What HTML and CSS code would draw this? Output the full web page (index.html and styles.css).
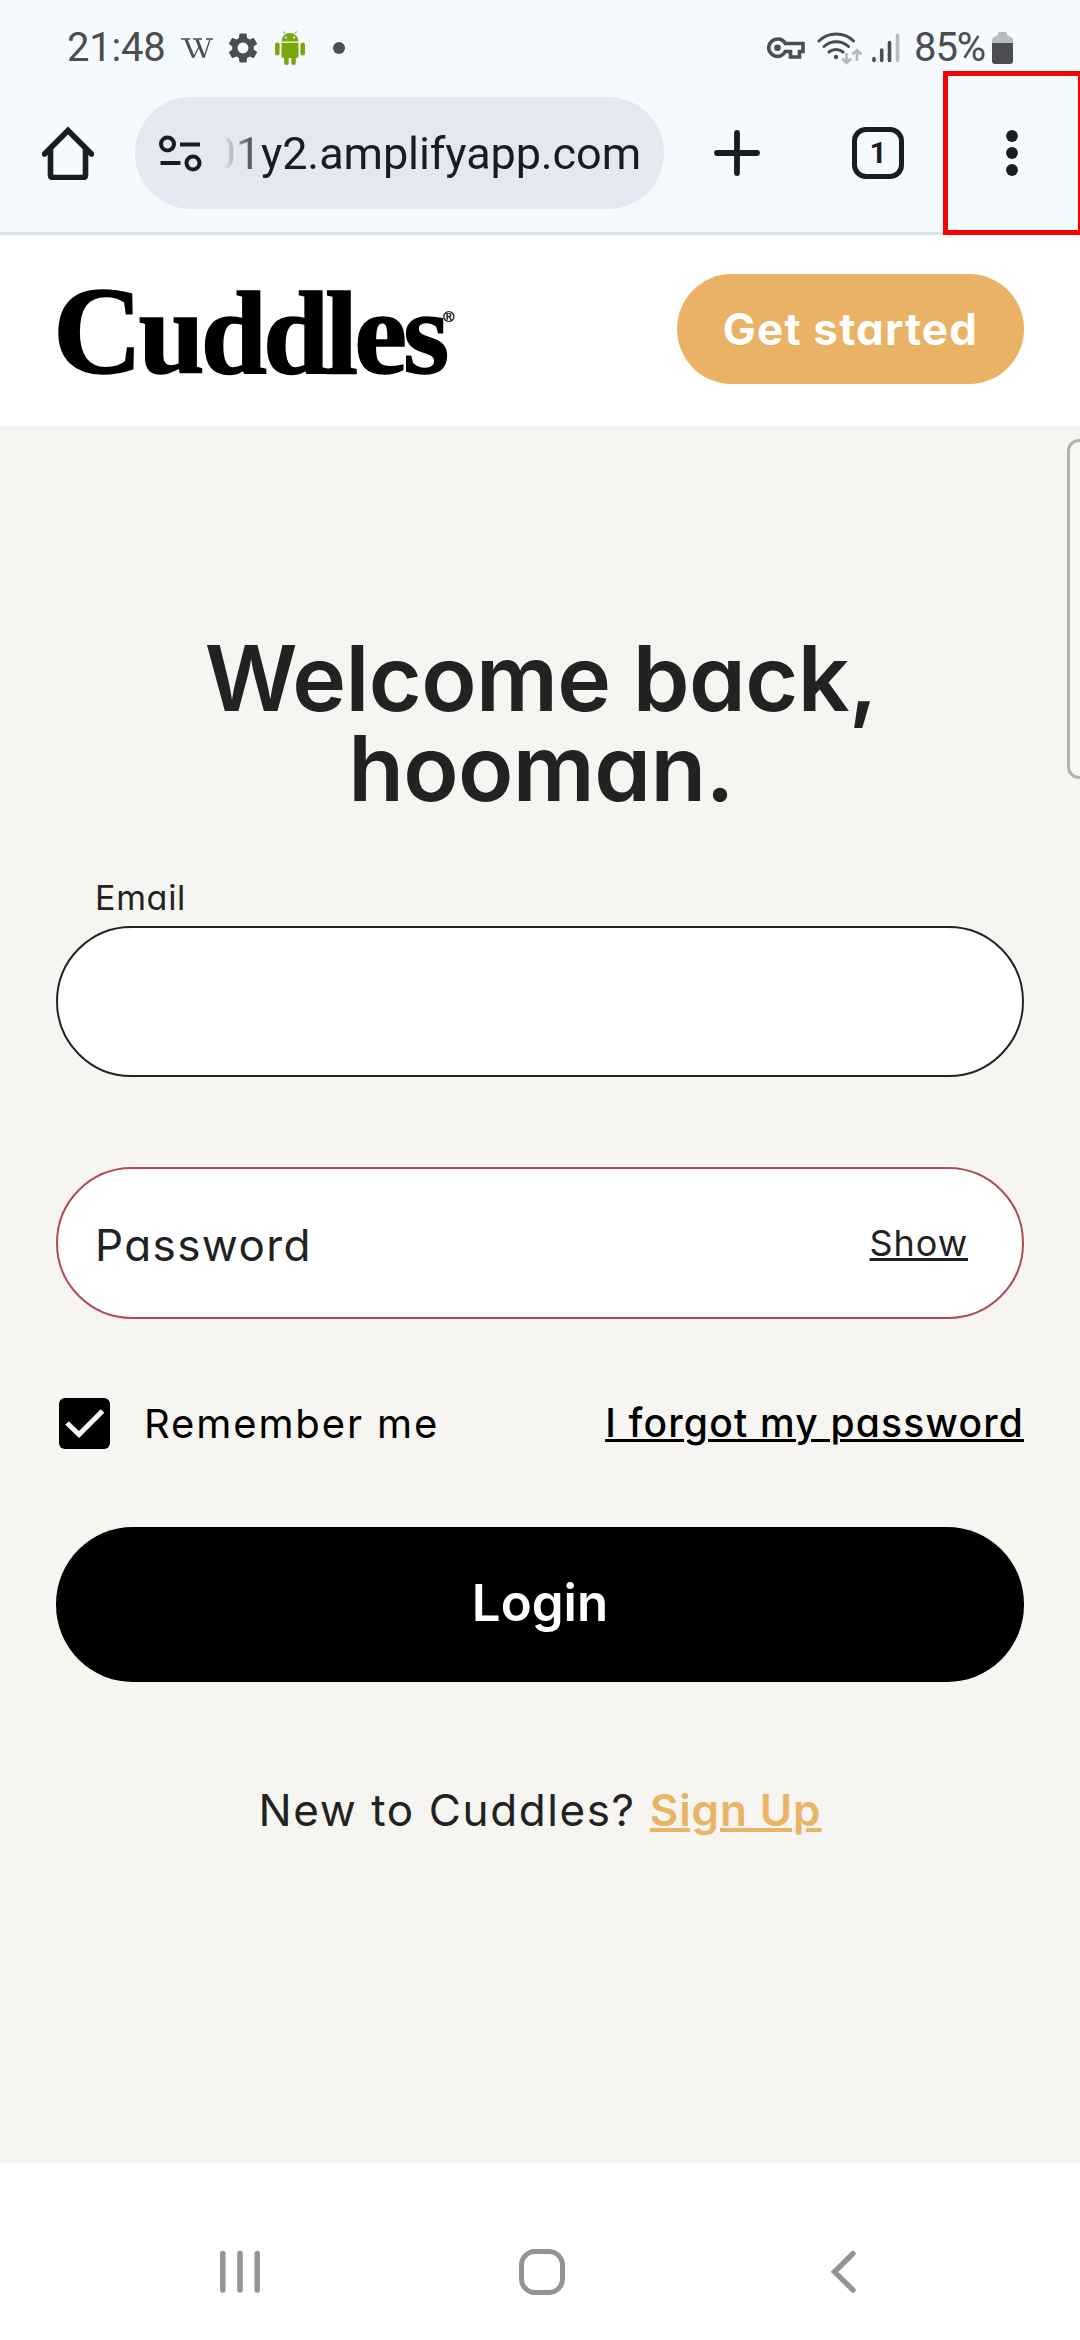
FILE: index.html
```html
<!DOCTYPE html>
<html lang="en">
<head>
<meta charset="utf-8">
<title>Cuddles – Login</title>
<link rel="stylesheet" href="styles.css">
</head>
<body>
<div class="screen">
  <div class="status-bar">
    <span class="clock">21:48</span>
    <svg class="wiki" width="32" height="22" viewBox="0 0 32 22"><g stroke="#4b4d4f" fill="none"><path d="M5 1.500 12.500 19.500M16 1.500 23 19.500" stroke-width="3"/><path d="M12.500 19.500 19 7M23 19.500 29 1.500" stroke-width="1.300"/><path d="M0 1h9M12 1h9M25 1h7" stroke-width="1.500"/></g></svg>
    <svg class="gear" width="36" height="36" viewBox="0 0 24 24"><path fill="#4b4d4f" d="M19.140 12.940c.04-.3.060-.61.060-.94 0-.32-.02-.64-.07-.94l2.030-1.580a.49.49 0 0 0 .12-.61l-1.920-3.320a.488.488 0 0 0-.59-.22l-2.390.96c-.5-.38-1.030-.7-1.620-.94l-.36-2.540a.484.484 0 0 0-.48-.41h-3.840c-.24 0-.43.170-.47.410l-.36 2.540c-.59.240-1.130.570-1.620.940l-2.390-.96c-.22-.08-.47 0-.59.220L2.740 8.870c-.12.210-.08.470.12.610l2.030 1.580c-.05.300-.09.630-.09.940s.02.640.070.940l-2.030 1.580a.49.49 0 0 0-.12.610l1.920 3.320c.12.220.37.290.59.220l2.390-.96c.5.380 1.030.700 1.620.940l.36 2.540c.05.240.24.410.48.410h3.840c.24 0 .44-.17.47-.41l.36-2.540c.59-.24 1.130-.56 1.620-.94l2.390.96c.22.080.47 0 .59-.22l1.920-3.320c.12-.22.070-.47-.12-.61l-2.010-1.580zM12 15.600c-1.980 0-3.600-1.620-3.600-3.600s1.620-3.600 3.600-3.600 3.600 1.620 3.600 3.600-1.620 3.600-3.600 3.600z"/></svg>
    <svg class="droid" width="30" height="34" viewBox="0 0 30 34"><g fill="#7ba70c"><path d="M6.500 10.500a8.500 8.500 0 0 1 17 0z"/><path d="M6.500 11.800h17V25a2 2 0 0 1-2 2h-13a2 2 0 0 1-2-2z"/><rect y="11.500" width="4.600" height="13" rx="2.300"/><rect x="25.400" y="11.500" width="4.600" height="13" rx="2.300"/><rect x="9.200" y="22" width="4.500" height="12" rx="2"/><rect x="16.300" y="22" width="4.500" height="12" rx="2"/></g><path d="M10 3 8.500.5M20 3 21.500.5" stroke="#7ba70c"/><circle cx="11" cy="6.500" r="1" fill="#f5faff"/><circle cx="19" cy="6.500" r="1" fill="#f5faff"/></svg>
    <span class="more-dot"></span>
    <svg class="key" width="38" height="22" viewBox="0 0 38 22"><path d="M10.500 2a8.700 8.700 0 1 0 7.800 12.500h5.200v5.500h9v-5.500h3.500v-8h-17.700A8.700 8.700 0 0 0 10.500 2z" fill="none" stroke="#4b4d4f" stroke-width="3.600"/><circle cx="10.500" cy="10.700" r="3.300" fill="#4b4d4f"/></svg>
    <svg class="wifi" width="46" height="34" viewBox="0 0 46 34"><g fill="none" stroke="#4b4d4f" stroke-width="3" stroke-linecap="round"><path d="M2 10a25 25 0 0 1 34.500 0M7 15.500a18 18 0 0 1 24.500 0M12 21a11 11 0 0 1 14 0"/></g><circle cx="19" cy="26" r="2.200" fill="#4b4d4f"/><path d="M29.500 22v10M25 27.500l4.500 4.500 4.500-4.500M40 30V19M35.500 23.500 40 19l4.500 4.500" fill="none" stroke="#b4b8bc" stroke-width="2.600"/></svg>
    <svg class="signal" width="28" height="30" viewBox="0 0 28 30"><g stroke-width="3.600" stroke-linecap="round" stroke="#4b4d4f"><path d="M2 25.500v2M9.700 17v10.500M17.500 9.500v18"/><path d="M25.500 2v25.500" stroke="#b9bcbf"/></g></svg>
    <span class="percent">85%</span>
    <svg class="battery" width="21" height="32" viewBox="0 0 21 32"><path d="M6 3V1.500Q6 0 7.500 0h6Q15 0 15 1.500V3l4 2q2 1 2 3v3H0V8q0-2 2-3z" fill="#b9bcbf"/><path d="M0 11h21v18q0 3-3 3H3q-3 0-3-3z" fill="#4b4d4f"/></svg>
  </div>

  <div class="toolbar">
    <svg class="home" width="52" height="54" viewBox="0 0 52 54"><path d="M2.500 28 26 4.500 49.500 28M8.500 24v25q0 2.500 2.500 2.500h30q2.500 0 2.500-2.500V24" fill="none" stroke="#191c20" stroke-width="5.600" stroke-linecap="round" stroke-linejoin="miter"/></svg>
    <div class="omnibox">
      <svg class="tune" width="43" height="37" viewBox="0 0 43 37"><g fill="none" stroke="#191c20" stroke-width="4"><circle cx="8.500" cy="9" r="6.500"/><circle cx="34" cy="28" r="6.500"/><path d="M21 9.500h20M1.500 28H21.500"/></g></svg>
      <span class="url">01y2.amplifyapp.com</span>
    </div>
    <svg class="plus" width="46" height="46" viewBox="0 0 46 46"><path d="M23 3v40M3 23h40" stroke="#191c20" stroke-width="5.800" stroke-linecap="round"/></svg>
    <span class="tabs">1</span>
    <svg class="kebab" width="12" height="46" viewBox="0 0 12 46"><g fill="#191c20"><circle cx="6" cy="6" r="5.900"/><circle cx="6" cy="23" r="5.900"/><circle cx="6" cy="40" r="5.900"/></g></svg>
    <div class="highlight"></div>
  </div>

  <header class="site-header">
    <div class="logo"><span class="wordmark">Cuddles</span><span class="reg">®</span></div>
    <a class="cta">Get started</a>
  </header>

  <main class="page">
    <div class="edge-handle"></div>
    <h1>Welcome back,<br>hooman.</h1>
    <label class="field-label">Email</label>
    <div class="field field-email"></div>
    <div class="field field-password"><span class="placeholder">Password</span><a class="show">Show</a></div>
    <div class="options">
      <svg class="check" width="51" height="51" viewBox="0 0 51 51"><rect width="51" height="51" rx="6"/><path d="M8 25 20 36.500 43.500 13" fill="none" stroke="#f6f5f1" stroke-width="5"/></svg>
      <span class="remember">Remember me</span>
      <a class="forgot">I forgot my password</a>
    </div>
    <div class="login">Login</div>
    <p class="signup">New to Cuddles? <a>Sign Up</a></p>
  </main>

  <nav class="nav-bar">
    <svg class="recents" width="40" height="46" viewBox="0 0 40 46"><path d="M2.800 4.500v36.500M20 4.500v36.500M37.200 4.500v36.500" stroke="#949494" stroke-width="5.500" stroke-linecap="round"/></svg>
    <span class="nav-home"></span>
    <svg class="back" width="32" height="46" viewBox="-7 0 32 46"><path d="M22 4.500 3.500 22.800 22 41" fill="none" stroke="#949494" stroke-width="5.300" stroke-linecap="round"/></svg>
  </nav>
</div>
</body>
</html>
```
FILE: styles.css
```css
* { box-sizing: border-box; }

body {
  margin: 0;
  background: #fff;
  font-family: Inter, "Open Sans", sans-serif;
  font-feature-settings: "cv11";
  color: #222;
}

svg { display: block; flex: none; }

.screen {
  width: 1080px;
  height: 2340px;
  display: flex;
  flex-direction: column;
  overflow: hidden;
}

/* Android status bar */
.status-bar {
  height: 71px;
  padding: 24px 67px 0;
  display: flex;
  align-items: center;
  background: #f5faff;
  font-family: Roboto, sans-serif;
  font-size: 40px;
  line-height: 47px;
  color: #4b4d4f;
}
.clock { width: 114px; letter-spacing: -0.2px; }
.wiki { margin-top: 3px; }
.gear { margin-left: 12px; }
.droid { margin-left: 14px; }
.more-dot { width: 12px; height: 12px; margin-left: 28px; border-radius: 50%; background: #4b4d4f; }
.key { margin-left: auto; }
.wifi { margin-left: 12px; }
.signal { margin-left: 9px; }
.percent { margin-left: 14px; letter-spacing: -1.1px; }
.battery { margin-left: 7px; }

/* Browser toolbar */
.toolbar {
  position: relative;
  height: 164px;
  padding: 26px 62px 23px 42px;
  display: flex;
  align-items: center;
  background: #f5faff;
  border-bottom: 3px solid #dde2e8;
}
.omnibox {
  width: 529px;
  height: 112px;
  margin-left: 41px;
  padding-left: 24px;
  display: flex;
  align-items: center;
  border-radius: 56px;
  background: #e3e8f1;
}
.url {
  width: 417px;
  height: 60px;
  margin-left: 22px;
  display: flex;
  justify-content: flex-end;
  overflow: hidden;
  font-family: Roboto, sans-serif;
  font-size: 45px;
  line-height: 61px;
  letter-spacing: -0.1px;
  color: #191c20;
  -webkit-mask-image: linear-gradient(to right, transparent, #000 38px);
  mask-image: linear-gradient(to right, transparent, #000 38px);
}
.plus { margin-left: 50px; }
.tabs {
  width: 52px;
  height: 52px;
  margin-left: 92px;
  border: 5.8px solid #191c20;
  border-radius: 14px;
  font: bold 30px/42px Roboto, sans-serif;
  text-align: center;
  color: #191c20;
}
.kebab { margin-left: auto; }
.highlight {
  position: absolute;
  left: 943px;
  top: 0;
  width: 140px;
  height: 164px;
  border: 5px solid #fb0000;
}

/* Site header */
.site-header {
  height: 196px;
  padding: 0 56px 3px;
  display: flex;
  align-items: center;
  justify-content: space-between;
  background: #fff;
  border-bottom: 5px solid #f0f0f0;
}
.logo {
  display: flex;
  height: 120px;
  font: bold 119px/126px "Liberation Serif", serif;
  letter-spacing: -4px;
  color: #000;
  -webkit-text-stroke: 1.5px #000;
}
.wordmark { margin-left: -3px; }
.wordmark::first-letter { font-size: 124px; }
.reg {
  margin: 38px 0 0 -2px;
  font: 15px/20px "Liberation Sans", sans-serif;
  letter-spacing: 0;
  -webkit-text-stroke: 0.4px #000;
}
.cta {
  width: 347px;
  height: 110px;
  border-radius: 55px;
  background: #e9b264;
  font-size: 44px;
  font-weight: 650;
  line-height: 110px;
  letter-spacing: 1.2px;
  text-align: center;
  color: #fff;
}

/* Login page */
.page {
  position: relative;
  height: 1732px;
  padding: 202px 56px 0;
  background: #f6f5f1;
}
.edge-handle {
  position: absolute;
  left: 1067px;
  top: 8px;
  width: 30px;
  height: 340px;
  border: 3px solid #b2b2af;
  border-radius: 12px;
  background: #f8f7f4;
}
h1 {
  margin: 0;
  padding-left: 2px;
  font-size: 91px;
  font-weight: 620;
  line-height: 90px;
  letter-spacing: -0.6px;
  text-align: center;
}
.field-label {
  display: block;
  height: 40px;
  margin: 65px 0 8px 39px;
  font-size: 34px;
  line-height: 40px;
  letter-spacing: 0.7px;
}
.field {
  display: flex;
  align-items: center;
  justify-content: space-between;
  padding: 0 54px 0 37px;
  border: 2px solid #222;
  border-radius: 76px;
  background: #fff;
}
.field-email { height: 151px; }
.field-password { height: 152px; margin-top: 90px; border-color: #b04b53; }
.placeholder { padding-top: 4px; font-size: 44px; letter-spacing: 1.4px; }
.show {
  font-size: 36px;
  letter-spacing: 0.9px;
  text-decoration: underline 3px;
}
.options {
  height: 51px;
  margin-top: 79px;
  padding-left: 3px;
  display: flex;
  align-items: center;
  color: #000;
}
.remember { margin-left: 34px; font-size: 40px; letter-spacing: 1.9px; }
.forgot {
  margin-left: auto;
  padding-bottom: 2px;
  font-size: 39px;
  font-weight: 500;
  letter-spacing: 1.2px;
  text-decoration: underline 3px;
}
.login {
  height: 155px;
  margin-top: 78px;
  border-radius: 77px;
  background: #000;
  font-size: 51px;
  font-weight: 600;
  line-height: 152px;
  text-align: center;
  color: #fff;
}
.signup {
  margin: 98px 0 0;
  font-size: 44px;
  line-height: 60px;
  letter-spacing: 1.6px;
  text-align: center;
}
.signup a {
  font-weight: 600;
  letter-spacing: 0.9px;
  color: #e9b466;
  text-decoration: underline 4px;
}

/* Android navigation bar */
.nav-bar {
  height: 177px;
  padding: 40px 224px 0 220px;
  display: flex;
  align-items: center;
  justify-content: space-between;
  background: #fff;
}
.nav-home { width: 46px; height: 46px; border: 5.5px solid #949494; border-radius: 16px; }
```
